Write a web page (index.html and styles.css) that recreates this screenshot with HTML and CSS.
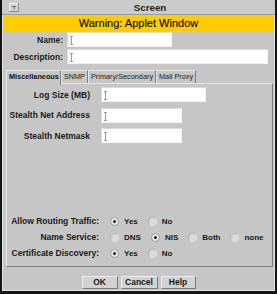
FILE: index.html
```html
<!DOCTYPE html>
<html lang="en">
<head>
  <meta charset="UTF-8">
  <title>Screen</title>
  <link rel="stylesheet" href="styles.css">
</head>
<body>
  <div class="window">
    <div class="titlebar">
      <svg class="menu-btn" width="10" height="9" viewBox="0 0 10 9">
        <rect x="0" y="0" width="10" height="9" fill="#d4d4d4"/>
        <path d="M0 8.5 H9.5 V0" fill="none" stroke="#8a8a8a"/>
        <path d="M0.5 8 V0.5 H9" fill="none" stroke="#f0f0f0"/>
        <path d="M3 3.5 H7 M5 3.5 V6.5" stroke="#6a6a6a"/>
      </svg>
      <span class="title">Screen</span>
    </div>

    <div class="warning">Warning: Applet Window</div>

    <div class="form">
      <label class="label">Name:</label>
      <div class="field name-field"><span class="caret"></span></div>
      <label class="label">Description:</label>
      <div class="field desc-field"><span class="caret"></span></div>
    </div>

    <div class="tabs">
      <div class="tab active">Miscellaneous</div>
      <div class="tab">SNMP</div>
      <div class="tab">Primary/Secondary</div>
      <div class="tab">Mail Proxy</div>
    </div>

    <div class="panel">
      <div class="fields">
        <label class="label">Log Size (MB)</label>
        <div class="field wide"><span class="caret"></span></div>
        <label class="label">Stealth Net Address</label>
        <div class="field short"><span class="caret"></span></div>
        <label class="label">Stealth Netmask</label>
        <div class="field short"><span class="caret"></span></div>
      </div>

      <div class="options">
        <span class="label">Allow Routing Traffic:</span>
        <div class="choices">
          <span class="radio checked"></span><span class="opt">Yes</span>
          <span class="radio"></span><span class="opt">No</span>
        </div>
        <span class="label">Name Service:</span>
        <div class="choices">
          <span class="radio"></span><span class="opt">DNS</span>
          <span class="radio checked"></span><span class="opt">NIS</span>
          <span class="radio"></span><span class="opt">Both</span>
          <span class="radio"></span><span class="opt">none</span>
        </div>
        <span class="label">Certificate Discovery:</span>
        <div class="choices">
          <span class="radio checked"></span><span class="opt">Yes</span>
          <span class="radio"></span><span class="opt">No</span>
        </div>
      </div>
    </div>

    <div class="buttons">
      <button class="ok">OK</button>
      <button class="cancel">Cancel</button>
      <button class="help">Help</button>
    </div>
  </div>
</body>
</html>
```

FILE: styles.css
```css
body {
  margin: 0;
  background: #111;
  font-family: "Liberation Sans", Arial, sans-serif;
  color: #1a1a1a;
}

.window {
  width: 277px;
  height: 294px;
  box-sizing: border-box;
  border-left: 2px solid #151515;
  border-right: 2px solid #151515;
  border-bottom: 3px solid #151515;
  background: #c6c6c6;
  box-shadow: inset 1px 0 0 #e4e4e4, inset -1px -1px 0 #e4e4e4;
  display: flex;
  flex-direction: column;
}

.titlebar {
  height: 14px;
  border-bottom: 1px solid #9a9a9a;
  background: #cbcbcb;
  display: flex;
  align-items: center;
  padding-left: 7px;
}

.menu-btn {
  display: block;
  margin-top: 1px;
}

.title {
  flex: 1;
  text-align: center;
  font-size: 9.8px;
  font-weight: bold;
  color: #262626;
  padding-left: 6px;
}

.warning {
  margin: 1px 1px 0;
  height: 15px;
  background: #ffcc00;
  text-align: center;
  font-size: 11px;
  line-height: 15px;
  color: #111;
  -webkit-text-stroke: 0.2px #111;
}

.label {
  font-size: 8.5px;
  font-weight: bold;
  text-align: right;
  white-space: nowrap;
}

.form {
  display: grid;
  grid-template-columns: 61px auto;
  column-gap: 4px;
  row-gap: 2px;
  align-items: center;
  margin-top: 1px;
  justify-items: start;
}

.form .label {
  justify-self: end;
}

.field {
  height: 15px;
  box-sizing: border-box;
  background: #fff;
  border: 1px solid #dadada;
  border-bottom-color: #f2f2f2;
  border-right-color: #f2f2f2;
  position: relative;
}

.caret {
  position: absolute;
  left: 2px;
  top: 3px;
  width: 3px;
  height: 7px;
  border-top: 1px solid #9a9a9a;
  border-bottom: 1px solid #9a9a9a;
}

.caret::before {
  content: "";
  position: absolute;
  left: 1px;
  top: 0;
  width: 1px;
  height: 7px;
  background: #9a9a9a;
}

.name-field {
  width: 105px;
}

.desc-field {
  width: 201px;
}

.tabs {
  display: flex;
  margin: 6px 0 0 4px;
  height: 13px;
  position: relative;
  z-index: 1;
}

.tab {
  font-size: 7.3px;
  line-height: 12px;
  padding: 0 2px;
  border: 1px solid #e6e6e6;
  border-bottom: none;
  border-right-color: #7e7e7e;
  color: #222;
  background: #c6c6c6;
}

.tab.active {
  font-weight: bold;
  color: #111;
  height: 14px;
  padding: 0 1px 0 2px;
}

.panel {
  margin: 0 2px 0 4px;
  height: 184px;
  box-sizing: border-box;
  border: 1px solid #e6e6e6;
  border-right-color: #7e7e7e;
  border-bottom-color: #7e7e7e;
  display: flex;
  flex-direction: column;
  padding: 3px 0 5px;
}

.fields {
  display: grid;
  grid-template-columns: 83px auto;
  column-gap: 11px;
  row-gap: 5.5px;
  align-items: center;
  justify-items: start;
}

.fields .label {
  justify-self: end;
}

.wide {
  width: 105px;
}

.short {
  width: 81px;
}

.options {
  margin-top: auto;
  display: grid;
  grid-template-columns: 92px auto;
  column-gap: 11px;
  grid-auto-rows: 16px;
  align-items: center;
}

.choices {
  display: flex;
  align-items: center;
}

.radio {
  width: 9px;
  height: 9px;
  box-sizing: border-box;
  border-radius: 50%;
  background: #d9d9d9;
  border: 1px solid #b2b2b2;
  border-right-color: #e2e2e2;
  border-bottom-color: #e2e2e2;
  display: flex;
  align-items: center;
  justify-content: center;
  margin-right: 5px;
}

.radio.checked {
  background: #ececec;
  border-color: #9a9a9a;
}

.radio.checked::after {
  content: "";
  width: 3px;
  height: 3px;
  border-radius: 50%;
  background: #111;
}

.opt {
  font-size: 8px;
  font-weight: bold;
  margin-right: 10px;
}

.buttons {
  display: flex;
  justify-content: center;
  gap: 3px;
  margin-top: 9px;
}

button {
  font-family: "Liberation Sans", Arial, sans-serif;
  font-size: 8.5px;
  font-weight: bold;
  color: #1a1a1a;
  height: 13px;
  padding: 0;
  background: #d2d2d2;
  border: 1px solid #ececec;
  border-right-color: #7a7a7a;
  border-bottom-color: #7a7a7a;
  line-height: 11px;
}

.ok {
  width: 36px;
}

.cancel {
  width: 37px;
}

.help {
  width: 35px;
}
```
